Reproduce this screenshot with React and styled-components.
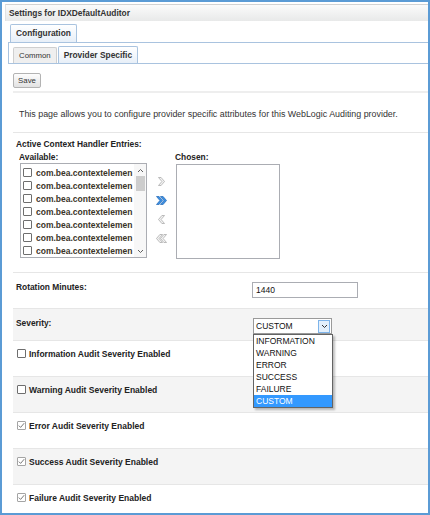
import React from "react";
import styled, { createGlobalStyle } from "styled-components";

const GlobalStyle = createGlobalStyle`
  html, body {
    margin: 0;
    padding: 0;
    background: #fff;
  }
  body {
    font-family: "Liberation Sans", Arial, sans-serif;
    font-size: 8px;
    color: #333;
  }
`;

const Frame = styled.div`
  width: 430px;
  height: 515px;
  box-sizing: border-box;
  border: 2px solid #5b9bd5;
  background: #fff;
  overflow: hidden;
`;

const Header = styled.div`
  margin: 2px 0 0 3px;
  height: 16px;
  padding-left: 3px;
  border-top: 1px solid #d2d2d2;
  border-left: 1px solid #e2e2e2;
  background: linear-gradient(#fbfbfb, #e8e9e9);
  font-weight: bold;
  font-size: 8.4px;
  line-height: 17px;
  color: #333;
`;

const TopTabs = styled.div`
  display: flex;
  margin: 3px 0 0 6px;
  padding-left: 2px;
  height: 18px;
  border-bottom: 1px solid #a9c3df;
`;

const SubTabs = styled.div`
  display: flex;
  align-items: flex-end;
  gap: 1px;
  margin-left: 6px;
  padding-left: 4px;
  height: 20px;
  border-left: 1px solid #a9c3df;
  border-bottom: 1px solid #a9c3df;
`;

const Tab = styled.div`
  box-sizing: border-box;
  height: ${(p) => p.$h}px;
  padding: 0 ${(p) => p.$px}px;
  border: 1px solid ${(p) => (p.$active ? "#a9c3df" : "#cfcfcf")};
  border-bottom: none;
  border-radius: 2px 2px 0 0;
  background: ${(p) =>
    p.$active ? "linear-gradient(#ffffff, #e7eff8)" : "#efefef"};
  font-weight: ${(p) => (p.$active ? "bold" : "normal")};
  font-size: ${(p) => (p.$active ? "8.4px" : "7.8px")};
  line-height: ${(p) => p.$h - 1}px;
  color: #333;
  white-space: nowrap;
`;

const Content = styled.div`
  padding-left: 11px;
`;

const Toolbar = styled.div`
  padding: 9px 0 3px;
  border-bottom: 2px solid #eeeeee;
`;

const Button = styled.button`
  display: block;
  width: 28px;
  height: 15px;
  padding: 0;
  border: 1px solid #b3b3b3;
  border-radius: 2px;
  background: linear-gradient(#fdfdfd, #e2e2e2);
  font-family: inherit;
  font-size: 7.8px;
  color: #333;
`;

const Description = styled.div`
  box-sizing: border-box;
  height: 39px;
  padding: 16px 0 0 6px;
  line-height: 10px;
  font-size: 8.9px;
  color: #333;
  white-space: nowrap;
`;

const Section = styled.div`
  box-sizing: border-box;
  height: 140px;
  padding: 6px 0 0 3px;
  border-top: 1px solid #e6e6e6;
`;

const Bold = styled.div`
  font-weight: bold;
  font-size: 8.4px;
  line-height: 10px;
  color: #222;
  white-space: nowrap;
`;

const Picker = styled.div`
  display: grid;
  grid-template-columns: 128px 28px 105px;
  grid-template-rows: 10px auto;
  row-gap: 1px;
  margin: 3px 0 0 3px;
`;

const ListBox = styled.div`
  display: flex;
  box-sizing: border-box;
  margin: ${(p) => p.$mt}px 0 0 1px;
  width: ${(p) => p.$w}px;
  height: 95px;
  border: 1px solid #abadb3;
  background: #fff;
`;

const ListItems = styled.div`
  flex: 1;
  min-width: 0;
  padding: 2px 0 0 2px;
  overflow: hidden;
`;

const ListRow = styled.div`
  display: flex;
  align-items: center;
  gap: 4px;
  height: 13px;
  white-space: nowrap;
  font-weight: bold;
  font-size: 8.5px;
  color: #3a3428;
`;

const ScrollBar = styled.div`
  display: flex;
  flex-direction: column;
  align-items: center;
  width: 12px;
  background: #f7f7f7;
`;

const ScrollArrow = styled.div`
  display: flex;
  align-items: center;
  justify-content: center;
  height: 12px;
  width: 100%;
`;

const Thumb = styled.div`
  width: 9px;
  height: 15px;
  background: #cdcdcd;
`;

const Track = styled.div`
  flex: 1;
`;

const ArrowColumn = styled.div`
  display: flex;
  flex-direction: column;
  align-items: center;
  gap: 10px;
  padding-top: 14px;
`;

const Box = styled.span`
  display: inline-flex;
  align-items: center;
  justify-content: center;
  flex: none;
  box-sizing: border-box;
  width: 9px;
  height: 9px;
  border: 1px solid ${(p) => (p.$checked ? "#a4a4a4" : "#6e6e6e")};
  border-radius: 1px;
  background: #fff;
`;

const Row = styled.div`
  box-sizing: border-box;
  height: ${(p) => p.$h}px;
  padding: ${(p) => (p.$check ? "8px 0 0 4px" : "9px 0 0 3px")};
  border-top: 1px solid #e6e6e6;
  background: ${(p) => (p.$shade ? "#f4f4f4" : "#fff")};
  display: ${(p) => (p.$check ? "flex" : "grid")};
  grid-template-columns: 236px 1fr;
  align-items: flex-start;
  gap: ${(p) => (p.$check ? "3px" : "0")};
`;

const TextInput = styled.div`
  box-sizing: border-box;
  width: 106px;
  height: 16px;
  padding-left: 3px;
  border: 1px solid #abadb3;
  background: #fff;
  font-size: 8.5px;
  line-height: 14px;
  color: #111;
`;

const SelectWrap = styled.div`
  position: relative;
  width: 79px;
  margin-left: 1px;
`;

const Select = styled.div`
  display: flex;
  align-items: center;
  box-sizing: border-box;
  height: 16px;
  padding: 0 1px 0 2px;
  border: 1px solid #9a9a9a;
  background: #fff;
  font-size: 8.5px;
  color: #111;
`;

const SelectValue = styled.span`
  flex: 1;
`;

const SelectButton = styled.span`
  display: flex;
  align-items: center;
  justify-content: center;
  box-sizing: border-box;
  width: 12px;
  height: 13px;
  border: 1px solid #7eb4ea;
  background: #e3effb;
`;

const Menu = styled.ul`
  position: absolute;
  top: 100%;
  left: 0;
  z-index: 2;
  box-sizing: border-box;
  width: 80px;
  margin: 0;
  padding: 0;
  list-style: none;
  border: 1px solid #646464;
  background: #fff;
  box-shadow: 2px 2px 2px rgba(0, 0, 0, 0.25);
`;

const MenuItem = styled.li`
  height: 12px;
  padding-left: 2px;
  line-height: 12px;
  font-size: 8.5px;
  color: ${(p) => (p.$selected ? "#fff" : "#111")};
  background: ${(p) => (p.$selected ? "#3399ff" : "transparent")};
`;

const CheckLabel = styled.span`
  font-weight: bold;
  font-size: 8.5px;
  line-height: 10px;
  color: #222;
  white-space: nowrap;
`;

const Checkbox = ({ checked }) => (
  <Box $checked={checked}>
    {checked && (
      <svg width="7" height="7" viewBox="0 0 7 7">
        <polyline
          points="0.8,3.6 2.6,5.4 6.2,1.2"
          fill="none"
          stroke="#6a6a6a"
          strokeWidth="0.9"
        />
      </svg>
    )}
  </Box>
);

const Chevron = ({ dir = "down", color = "#555" }) => (
  <svg width="7" height="5" viewBox="0 0 7 5">
    <polyline
      points={dir === "up" ? "1,4 3.5,1.5 6,4" : "1,1 3.5,3.5 6,1"}
      fill="none"
      stroke={color}
      strokeWidth="1"
    />
  </svg>
);

const chevronPts = (x) =>
  `${x},0.5 ${x + 2.6},0.5 ${x + 6},4.5 ${x + 2.6},8.5 ${x},8.5 ${x + 3.4},4.5`;

const MoveArrow = ({ double, left, blue }) => {
  const w = double ? 11 : 7;
  const fill = blue ? "#3b8fe3" : "#f2f2f2";
  const stroke = blue ? "#2167b5" : "#a3a3a3";
  return (
    <svg
      width={w}
      height="9"
      viewBox={`0 0 ${w} 9`}
      style={left ? { transform: "scaleX(-1)" } : undefined}
    >
      <polygon points={chevronPts(0.5)} fill={fill} stroke={stroke} strokeWidth="0.7" />
      {double && (
        <polygon points={chevronPts(4.5)} fill={fill} stroke={stroke} strokeWidth="0.7" />
      )}
    </svg>
  );
};

// the list only shows the clipped start of each context element name
const handlers = Array.from({ length: 7 }, () => "com.bea.contextelemen");

const severities = ["INFORMATION", "WARNING", "ERROR", "SUCCESS", "FAILURE", "CUSTOM"];

const flags = [
  { label: "Information Audit Severity Enabled", checked: false },
  { label: "Warning Audit Severity Enabled", checked: false },
  { label: "Error Audit Severity Enabled", checked: true },
  { label: "Success Audit Severity Enabled", checked: true },
  { label: "Failure Audit Severity Enabled", checked: true },
];

export default function App() {
  return (
    <>
      <GlobalStyle />
      <Frame>
        <Header>Settings for IDXDefaultAuditor</Header>

        <TopTabs>
          <Tab $active $h={18} $px={5}>
            Configuration
          </Tab>
        </TopTabs>
        <SubTabs>
          <Tab $h={16} $px={5}>
            Common
          </Tab>
          <Tab $active $h={17} $px={5}>
            Provider Specific
          </Tab>
        </SubTabs>

        <Content>
          <Toolbar>
            <Button>Save</Button>
          </Toolbar>

          <Description>
            This page allows you to configure provider specific attributes for this
            WebLogic Auditing provider.
          </Description>

          <Section>
            <Bold>Active Context Handler Entries:</Bold>
            <Picker>
              <Bold>Available:</Bold>
              <span />
              <Bold>Chosen:</Bold>

              <ListBox $w={127} $mt={0}>
                <ListItems>
                  {handlers.map((h, i) => (
                    <ListRow key={i}>
                      <Checkbox />
                      {h}
                    </ListRow>
                  ))}
                </ListItems>
                <ScrollBar>
                  <ScrollArrow>
                    <Chevron dir="up" color="#606060" />
                  </ScrollArrow>
                  <Thumb />
                  <Track />
                  <ScrollArrow>
                    <Chevron color="#606060" />
                  </ScrollArrow>
                </ScrollBar>
              </ListBox>

              <ArrowColumn>
                <MoveArrow />
                <MoveArrow double blue />
                <MoveArrow left />
                <MoveArrow double left />
              </ArrowColumn>

              <ListBox $w={104} $mt={1} />
            </Picker>
          </Section>

          <Row $h={36}>
            <Bold>Rotation Minutes:</Bold>
            <TextInput>1440</TextInput>
          </Row>

          <Row $h={32} $shade>
            <Bold>Severity:</Bold>
            <SelectWrap>
              <Select>
                <SelectValue>CUSTOM</SelectValue>
                <SelectButton>
                  <Chevron color="#333" />
                </SelectButton>
              </Select>
              <Menu>
                {severities.map((s) => (
                  <MenuItem key={s} $selected={s === "CUSTOM"}>
                    {s}
                  </MenuItem>
                ))}
              </Menu>
            </SelectWrap>
          </Row>

          {flags.map((f, i) => (
            <Row key={f.label} $h={36} $check $shade={i % 2 === 1}>
              <Checkbox checked={f.checked} />
              <CheckLabel>{f.label}</CheckLabel>
            </Row>
          ))}
        </Content>
      </Frame>
    </>
  );
}
